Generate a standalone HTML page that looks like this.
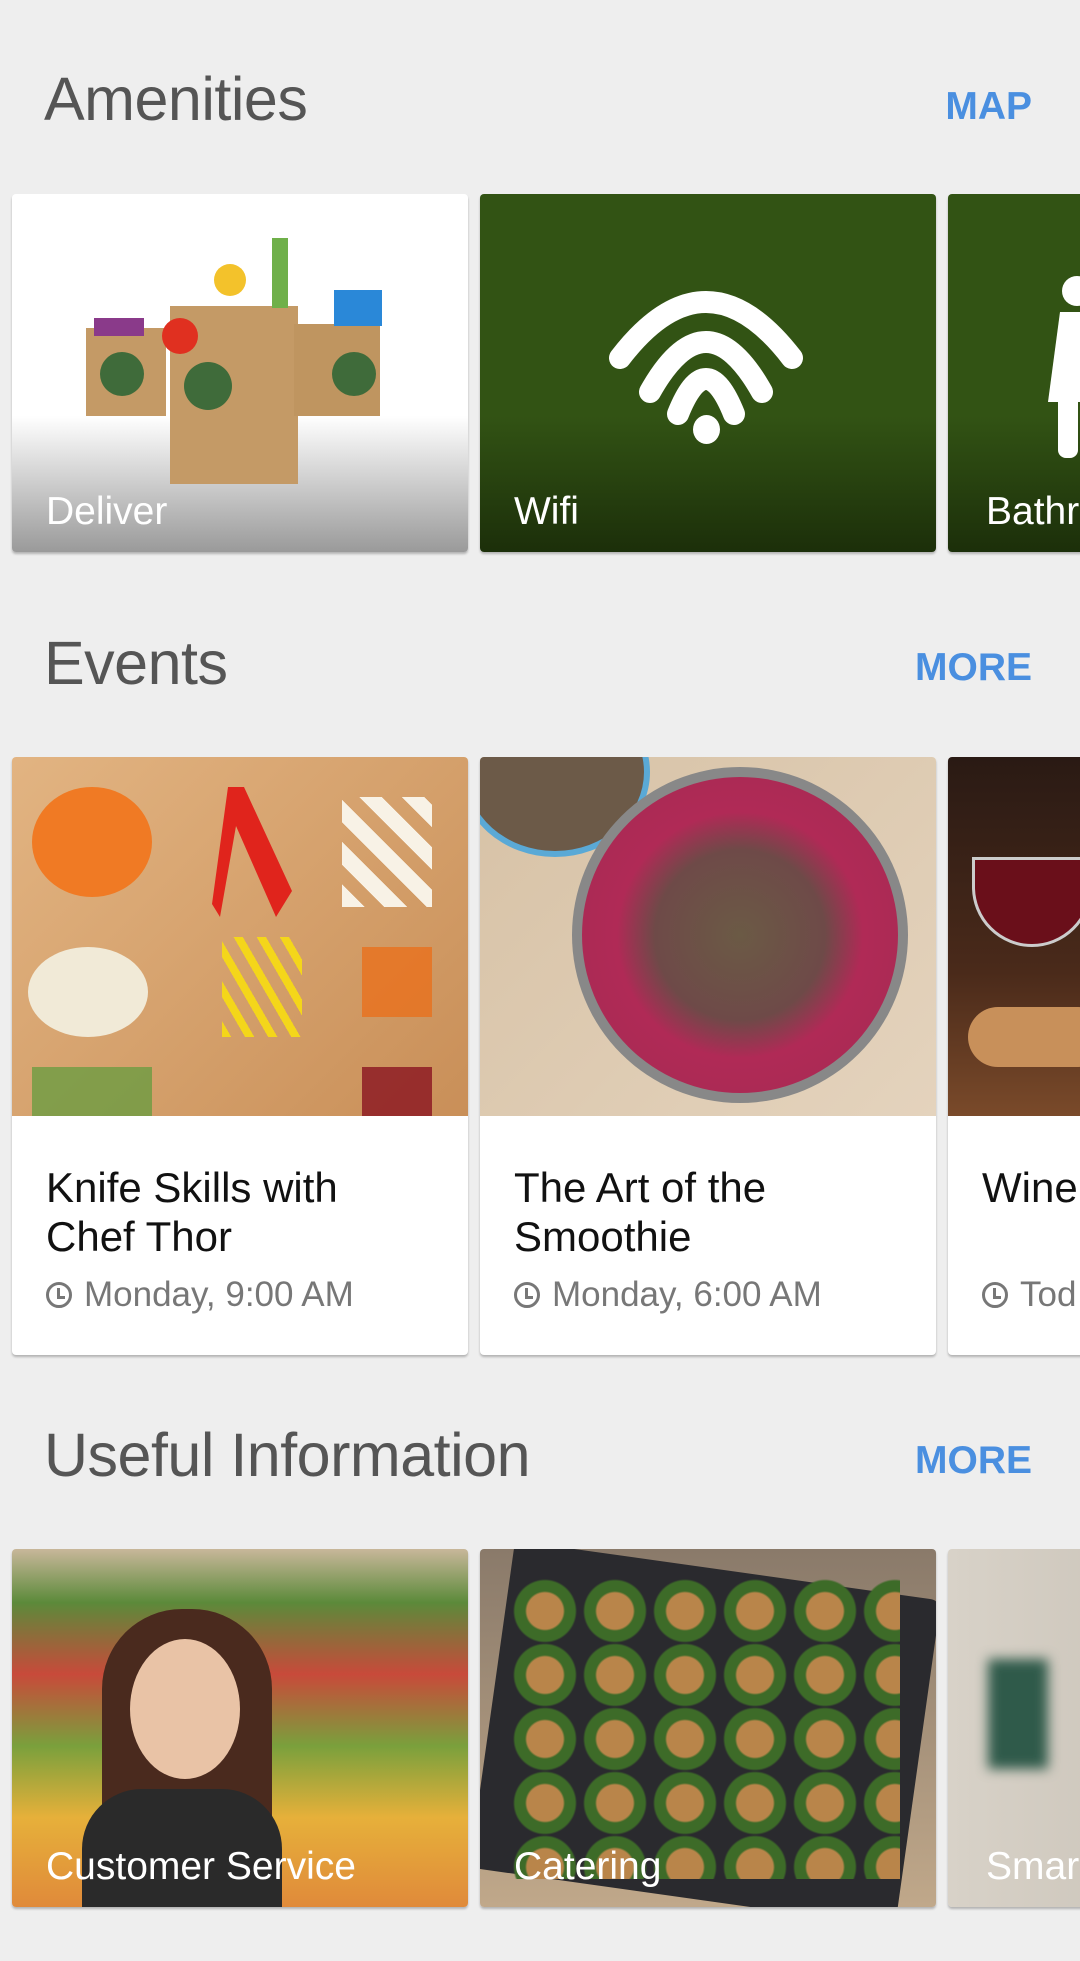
<!DOCTYPE html>
<html><head><meta charset="utf-8"><style>
*{margin:0;padding:0;box-sizing:border-box}
body{width:1080px;height:1961px;background:#eeeeee;font-family:"Liberation Sans",sans-serif;position:relative;overflow:hidden}
.h{position:absolute;left:44px;font-size:61px;color:#555;letter-spacing:-0.5px}
.lk{position:absolute;right:48px;font-size:39px;font-weight:bold;color:#4a8fe0}
.c{position:absolute;width:456px;border-radius:4px;overflow:hidden;box-shadow:0 2px 2px rgba(0,0,0,.25)}
.lbl{position:absolute;left:34px;bottom:18px;color:#fff;font-size:39px}
.ev{background:#fff}
.ev .img{height:359px;position:relative;overflow:hidden}
.ev .t{position:absolute;left:34px;top:406px;font-size:42px;line-height:49px;color:#111}
.ev .d{position:absolute;left:34px;top:518px;font-size:35px;color:#777;display:flex;align-items:center;gap:12px}
.clk{width:26px;height:26px;border:3.5px solid #777;border-radius:50%;position:relative}
.clk:after{content:"";position:absolute;left:8px;top:3px;width:5px;height:8px;border-left:3px solid #777;border-bottom:3px solid #777}
</style></head><body>

<div class="h" style="top:64px">Amenities</div>
<div class="lk" style="top:85px">MAP</div>

<div class="c" style="left:12px;top:194px;height:358px;background:linear-gradient(#fff 0%,#fff 62%,#9a9a9a 100%)">
  <svg width="456" height="358" style="position:absolute;left:0;top:0">
    <rect x="74" y="134" width="80" height="88" fill="#c49a66"/>
    <rect x="82" y="124" width="50" height="18" fill="#8a3a8a"/>
    <rect x="158" y="112" width="128" height="178" fill="#c49a66"/>
    <rect x="282" y="130" width="86" height="92" fill="#bf9560"/>
    <circle cx="168" cy="142" r="18" fill="#e03020"/><circle cx="218" cy="86" r="16" fill="#f3c22b"/>
    <rect x="260" y="44" width="16" height="70" fill="#6fb04a"/>
    <rect x="322" y="96" width="48" height="36" fill="#2a88d8"/>
    <circle cx="110" cy="180" r="22" fill="#3f6b3a"/><circle cx="196" cy="192" r="24" fill="#3f6b3a"/><circle cx="342" cy="180" r="22" fill="#3f6b3a"/>
  </svg>
  <div class="lbl">Deliver</div>
</div>
<div class="c" style="left:480px;top:194px;height:358px;background:linear-gradient(#325314 0%,#325314 62%,#1c2f0a 100%)">
  <svg width="456" height="358" style="position:absolute;left:0;top:0" fill="none" stroke="#fff" stroke-width="22" stroke-linecap="round">
    <path d="M140 164 Q226 52 312 164"/>
    <path d="M170 198 Q226 98 282 198"/>
    <path d="M198 220 Q226 150 254 220" />
  </svg>
  <div style="position:absolute;left:213px;top:221px;width:27px;height:29px;border-radius:50%;background:#fff"></div>
  <div class="lbl">Wifi</div>
</div>
<div class="c" style="left:948px;top:194px;height:358px;background:linear-gradient(#325314 0%,#325314 62%,#1c2f0a 100%)">
  <div style="position:absolute;left:114px;top:82px;width:30px;height:30px;border-radius:50%;background:#fff"></div>
  <div style="position:absolute;left:100px;top:118px;width:40px;height:90px;background:#fff;clip-path:polygon(30% 0,100% 0,100% 100%,0 100%)"></div>
  <div style="position:absolute;left:110px;top:200px;width:20px;height:64px;background:#fff;border-radius:0 0 8px 8px"></div>
  <div class="lbl" style="left:38px">Bathr</div>
</div>

<div class="h" style="top:628px">Events</div>
<div class="lk" style="top:646px">MORE</div>

<div class="c ev" style="left:12px;top:757px;height:598px">
  <div class="img" style="background:linear-gradient(135deg,#e2b482,#c98f58)">
    <div style="position:absolute;left:20px;top:30px;width:120px;height:110px;border-radius:50%;background:#f07a24"></div>
    <div style="position:absolute;left:200px;top:30px;width:80px;height:130px;background:#e0241c;clip-path:polygon(20% 0,40% 0,100% 80%,80% 100%,30% 30%,10% 100%,0 90%)"></div>
    <div style="position:absolute;left:330px;top:40px;width:90px;height:110px;background:repeating-linear-gradient(45deg,#f8f2e6 0 16px,transparent 16px 30px)"></div>
    <div style="position:absolute;left:16px;top:190px;width:120px;height:90px;border-radius:50%;background:#f1ead7"></div>
    <div style="position:absolute;left:210px;top:180px;width:80px;height:100px;background:repeating-linear-gradient(60deg,#f4d61a 0 8px,transparent 8px 20px)"></div>
    <div style="position:absolute;left:350px;top:190px;width:70px;height:70px;background:#e8711d;opacity:.8"></div>
    <div style="position:absolute;left:20px;top:310px;width:120px;height:50px;background:#5e9b3c;opacity:.7"></div>
    <div style="position:absolute;left:350px;top:310px;width:70px;height:50px;background:#8a1420;opacity:.8"></div>
  </div>
  <div class="t">Knife Skills with<br>Chef Thor</div>
  <div class="d"><span class="clk"></span>Monday, 9:00 AM</div>
</div>
<div class="c ev" style="left:480px;top:757px;height:598px">
  <div class="img" style="background:linear-gradient(135deg,#d7c2a6,#e4d3bd)">
    <div style="position:absolute;left:-20px;top:-70px;width:190px;height:170px;border-radius:50%;background:#6c5a48;border:6px solid #5aa9d6"></div>
    <div style="position:absolute;left:92px;top:10px;width:336px;height:336px;border-radius:50%;background:#888;"></div>
    <div style="position:absolute;left:102px;top:20px;width:316px;height:316px;border-radius:50%;background:radial-gradient(#6b5a45 0%,#6e4a48 38%,#b02a56 55%,#a42a52 100%)"></div>
  </div>
  <div class="t">The Art of the<br>Smoothie</div>
  <div class="d"><span class="clk"></span>Monday, 6:00 AM</div>
</div>
<div class="c ev" style="left:948px;top:757px;height:598px">
  <div class="img" style="background:linear-gradient(#2a1a14,#4a2a1a 60%,#7a4a2a)">
    <div style="position:absolute;left:24px;top:100px;width:120px;height:90px;border-radius:0 0 60px 60px;background:#6a0f1a;border:3px solid #ccc"></div>
    <div style="position:absolute;left:20px;top:250px;width:140px;height:60px;border-radius:30px;background:#c8905a"></div>
  </div>
  <div class="t" style="left:34px">Wine</div>
  <div class="d"><span class="clk"></span>Tod</div>
</div>

<div class="h" style="top:1420px">Useful Information</div>
<div class="lk" style="top:1439px">MORE</div>

<div class="c" style="left:12px;top:1549px;height:358px;background:linear-gradient(#c8b79a 0%,#5c8a3a 15%,#c84a3a 35%,#7aa03c 55%,#e6b03a 75%,#e08a3a 100%)">
  <div style="position:absolute;left:90px;top:60px;width:170px;height:300px;border-radius:80px 80px 0 0;background:#4a2a1e"></div>
  <div style="position:absolute;left:118px;top:90px;width:110px;height:140px;border-radius:50%;background:#e9c3a6"></div>
  <div style="position:absolute;left:70px;top:240px;width:200px;height:130px;border-radius:60px 60px 0 0;background:#2a2a2a"></div>
  <div class="lbl">Customer Service</div>
</div>
<div class="c" style="left:480px;top:1549px;height:358px;background:linear-gradient(#8a7a6a,#c0a88a)">
  <div style="position:absolute;left:10px;top:20px;width:430px;height:330px;background:#2a2a2e;transform:rotate(8deg);border-radius:10px"></div>
  <div style="position:absolute;left:30px;top:30px;width:390px;height:300px;background:radial-gradient(circle,#b9854a 0 18px,#3d6b28 20px 30px,transparent 32px) 0 0/70px 64px"></div>
  <div class="lbl">Catering</div>
</div>
<div class="c" style="left:948px;top:1549px;height:358px;background:linear-gradient(90deg,#d8d2c8,#bcb4a8)">
  <div style="position:absolute;left:40px;top:110px;width:60px;height:110px;background:#2f5a4a;filter:blur(6px)"></div>
  <div class="lbl" style="left:38px">Smar</div>
</div>
</body></html>
